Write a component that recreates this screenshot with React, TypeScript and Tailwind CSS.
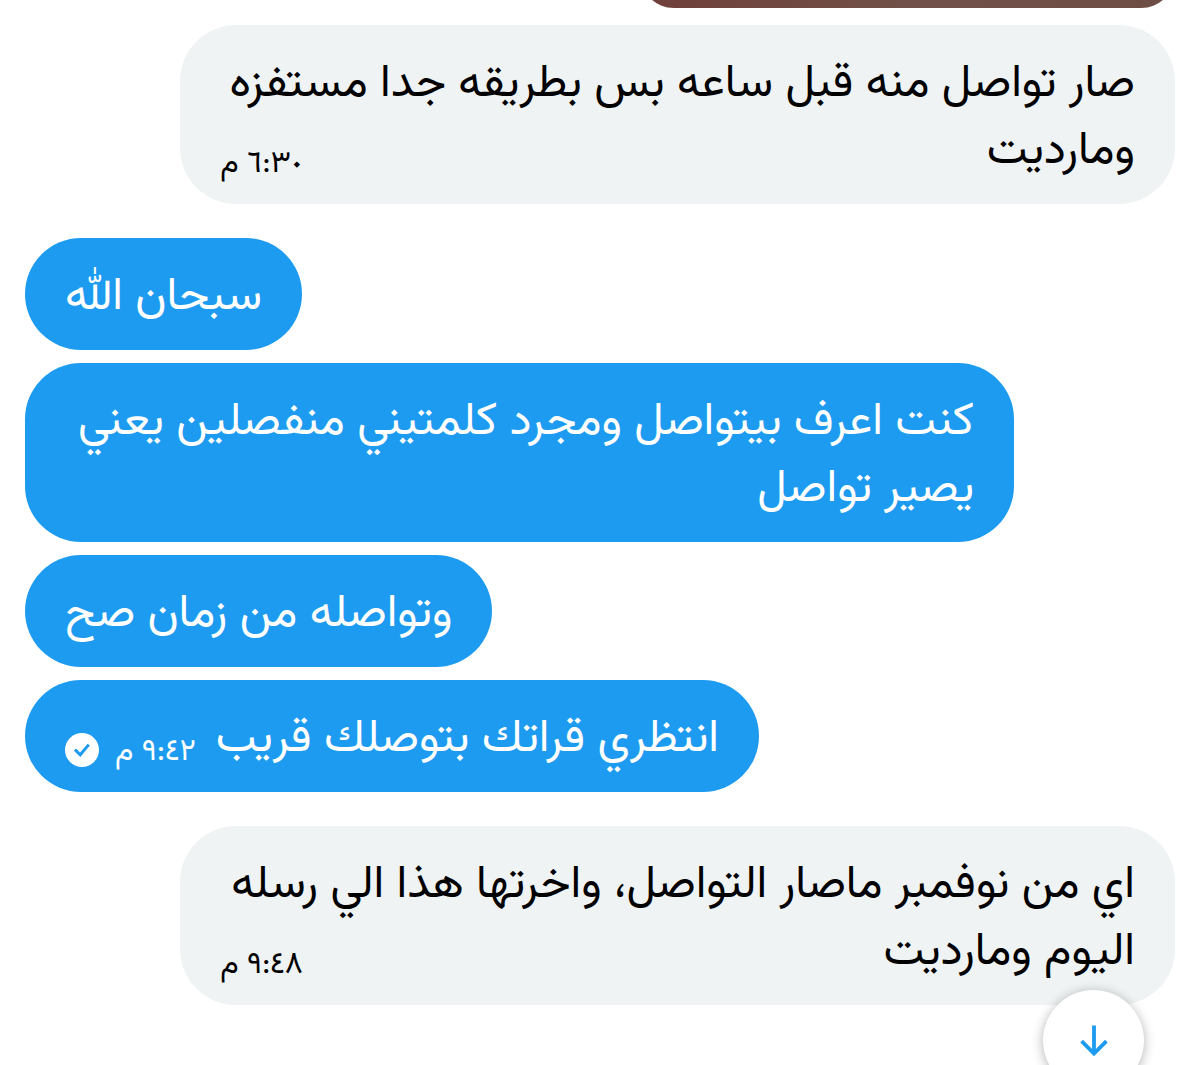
import type { ReactNode } from "react";

function Check() {
  return (
    <svg className="mb-[6px] size-[34px]" viewBox="0 0 34 34" role="img" aria-label="تم الإرسال">
      <circle cx="17" cy="17" r="17" fill="#fff" />
      <path d="M10 16.6l5.2 5.2L23.8 11.6" fill="none" stroke="#1d9bf0" strokeWidth="3" />
    </svg>
  );
}

function Time({ children, sent = false }: { children: ReactNode; sent?: boolean }) {
  return (
    <span className="float-left mr-5 flex h-[67px] items-center gap-4 pt-6 text-[31px] leading-none">
      <time>{children}</time>
      {sent && <Check />}
    </span>
  );
}

function Received({ children }: { children: ReactNode }) {
  return (
    <li className="max-w-[86.5%] self-start rounded-[56px] bg-[#eff3f4] px-10 pt-[27px] pb-[18px] text-black">
      {children}
    </li>
  );
}

function Sent({ children }: { children: ReactNode }) {
  return (
    <li className="max-w-[86%] self-end rounded-[56px] bg-[#1d9bf0] px-10 pt-[27px] pb-[18px] text-white">
      {children}
    </li>
  );
}

export default function App() {
  return (
    <main
      dir="rtl"
      className="relative min-h-screen overflow-hidden bg-white px-[25px] font-['Vazirmatn','Noto_Sans_Arabic_UI','DejaVu_Sans',sans-serif] text-[46px] leading-[67px]"
    >
      <div className="flex h-[8px] w-[46.5%] items-end overflow-hidden">
        <div className="h-[112px] w-full shrink-0 rounded-[34px] bg-linear-to-l from-[#6e4d45] via-[#705048] to-[#703f3a]" />
      </div>
      <ol className="mt-[17px] flex flex-col gap-[34px]">
        <Received>
          صار تواصل منه قبل ساعه بس بطريقه جدا مستفزه ومارديت
          <Time>٦:٣٠ م</Time>
        </Received>
        <li>
          <ol className="flex flex-col gap-[13px]">
            <Sent>سبحان الله</Sent>
            <Sent>كنت اعرف بيتواصل ومجرد كلمتيني منفصلين يعني يصير تواصل</Sent>
            <Sent>وتواصله من زمان صح</Sent>
            <Sent>
              انتظري قراتك بتوصلك قريب
              <Time sent>٩:٤٢ م</Time>
            </Sent>
          </ol>
        </li>
        <Received>
          اي من نوفمبر ماصار التواصل، واخرتها هذا الي رسله اليوم ومارديت
          <Time>٩:٤٨ م</Time>
        </Received>
      </ol>
      <button
        type="button"
        aria-label="الانتقال إلى الأسفل"
        className="absolute right-14 -bottom-[26px] flex size-[101px] items-center justify-center rounded-full bg-white text-[#1d9bf0] shadow-[0_2px_12px_rgba(0,0,0,0.3)]"
      >
        <svg className="h-[32px] w-[28px]" viewBox="0 0 28 32" fill="none" stroke="currentColor" strokeWidth="3.8" aria-hidden="true">
          <path d="M14 0.5v28M1.6 16.2L14 28.6l12.4-12.4" />
        </svg>
      </button>
    </main>
  );
}
